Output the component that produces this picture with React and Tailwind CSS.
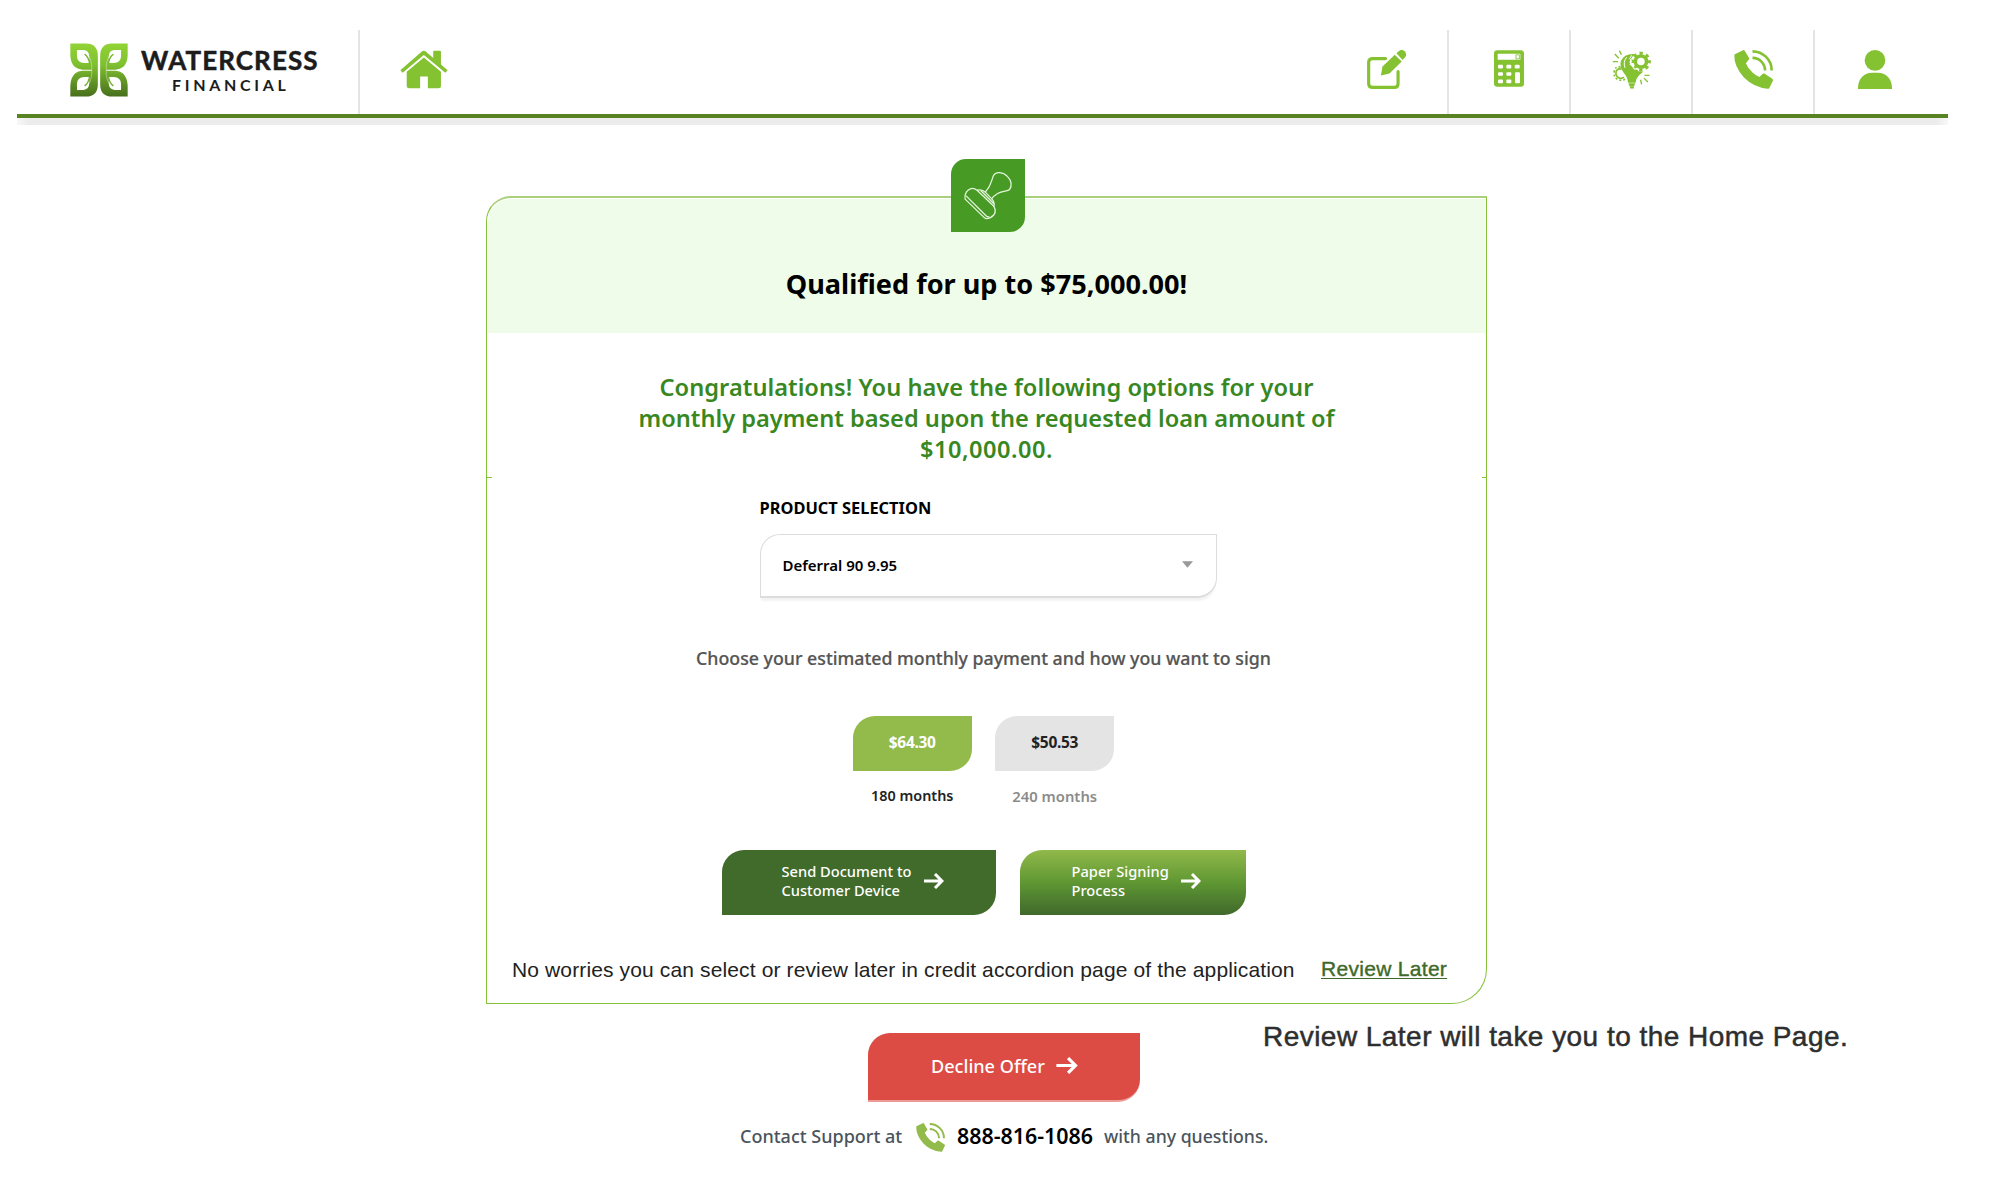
import React from "react";

function LogoHalf() {
  return (
    <g>
      <path d="M31 22H78Q114 22 114 60V144Q114 182 78 182H31V148Q32 124 46 112Q54 105 68 104H95V101H68Q54 100 45 93Q32 82 31 58Z" fill="url(#leaf)" />
      <path d="M51 42H70Q88 43 88 62V81H73Q51 80 51 60ZM51 162H70Q88 161 88 142V123H73Q51 124 51 144Z" fill="#fff" />
      <path d="M74 54Q86 62 89 82M74 150Q86 142 89 122" fill="none" stroke="#74b32f" strokeWidth="4" />
      <path d="M82 53Q95 68 95.500 88V116Q95 136 82 151" fill="none" stroke="#fff" strokeWidth="2" opacity=".55" />
    </g>
  );
}

function Logo() {
  return (
    <svg viewBox="30 21 175 162" className="h-[54px] w-[58px]">
      <defs>
        <linearGradient id="leaf" gradientUnits="userSpaceOnUse" x1="0" y1="22" x2="0" y2="182">
          <stop offset="0" stopColor="#92d336" />
          <stop offset=".4" stopColor="#7fc030" />
          <stop offset="1" stopColor="#486f1d" />
        </linearGradient>
      </defs>
      <LogoHalf />
      <g transform="translate(235 0) scale(-1 1)">
        <LogoHalf />
      </g>
    </svg>
  );
}

function HomeIcon() {
  return (
    <svg viewBox="1201 91 143 116" className="h-[39px] w-[48px]" fill="#84c232">
      <path d="M1202 151L1267 95Q1272 91 1277 95L1300 115V96Q1300 93 1303 93H1320Q1323 93 1323 96V134L1343 151L1336 159L1272 106L1209 159Z" />
      <path d="M1272 113L1323 156V199Q1323 205 1316 205H1284V170H1261V205H1228Q1221 205 1221 198V156Z" />
    </svg>
  );
}

function EditIcon() {
  return (
    <svg viewBox="81 89 118 118" className="h-[39px] w-[39px]" fill="#84c232">
      <path d="M137 115H98Q86 115 86 127V190Q86 202 98 202H164Q175 202 175 190V154" fill="none" stroke="#84c232" strokeWidth="9.500" strokeLinecap="round" />
      <path d="M123 166L128 139L165 103L186 124L149 160Z" />
      <path d="M170 99L178 92Q187 85 195 93Q203 102 196 111L189 119Z" />
    </svg>
  );
}

function CalculatorIcon() {
  return (
    <svg viewBox="462 94 90 110" className="h-[37px] w-[30px]">
      <rect x="462" y="94" width="90" height="110" rx="10" fill="#84c232" />
      <g fill="#fff">
        <rect x="473" y="105" width="68" height="18" rx="2" />
        {[474, 499, 524].map((x) => (
          <rect key={x} x={x} y="138" width="15" height="11" rx="3" />
        ))}
        {[474, 499].map((x) => (
          <rect key={x} x={x} y="160" width="15" height="11" rx="3" />
        ))}
        {[474, 499].map((x) => (
          <rect key={x} x={x} y="182" width="15" height="11" rx="3" />
        ))}
        <rect x="525" y="160" width="15" height="33" rx="3" />
      </g>
      <rect x="528" y="108" width="10" height="12" fill="none" stroke="#84c232" strokeWidth="2.500" />
    </svg>
  );
}

function IdeaIcon() {
  return (
    <svg viewBox="814 90 117 118" className="h-[39px] w-[39px]" fill="none" stroke="#84c232">
      <path d="M882 102Q850 100 840 124Q836 144 850 160Q861 172 862 189H885Q886 176 896 166L908 156Q896 156 890 150L880 148L872 138L866 126L874 112Z" fill="#84c232" stroke="none" />
      <circle cx="901" cy="125" r="17" strokeWidth="11" />
      <circle cx="901" cy="125" r="25.500" strokeWidth="9" strokeDasharray="10 10.030" strokeDashoffset="5" />
      <path d="M873 106L867 116L873 124L868 134L878 138L881 148L890 146L895 155" stroke="#fff" strokeWidth="3" />
      <path d="M858 112Q846 126 853 144" stroke="#fff" strokeWidth="3" />
      <path d="M842 148Q830 145 826 155Q823 168 834 174Q842 178 850 172" strokeWidth="5" />
      <path d="M840 142Q822 138 820 156Q817 172 832 180Q844 184 854 178" strokeWidth="5" strokeDasharray="6 6" />
      <path d="M864 193H883M866 198H881M868 204H880" strokeWidth="5" />
      <path d="M836 92L842 104M822 102L834 115M816 125L832 125M912 167L927 167M910 175L922 187M900 180L903 194" strokeWidth="4" />
    </svg>
  );
}

function PhoneIcon({ className, color }) {
  return (
    <svg viewBox="190 90 118 118" className={className} fill={color}>
      <path d="M191 106Q191 103 194 102L219 90Q221 90 223 93L236 115Q237 117 235 119L226 130Q231 144 246 158Q257 168 267 172L277 162Q280 160 283 162L306 177Q308 179 308 182L297 205Q296 208 292 207Q250 203 220 173Q190 140 191 106Z" />
      <path d="M246 94A58 58 0 0 1 304 152M246 114A38 38 0 0 1 284 152" fill="none" stroke={color} strokeWidth="8" />
    </svg>
  );
}

function UserIcon() {
  return (
    <svg viewBox="564 90 102 117" className="h-[39px] w-[34px]" fill="#84c232">
      <circle cx="615" cy="121" r="31" />
      <path d="M564 207V203C565 174 583 158 606 158H624C647 158 665 174 666 203V207Z" />
    </svg>
  );
}

function StampIcon() {
  return (
    <svg viewBox="631 57 220 220" className="size-full" fill="none" stroke="#e4f6dc" strokeWidth="3.800" strokeLinejoin="round">
      <path d="M733 157C752 135 750 125 757 108C764 93 787 96 800 110C812 122 814 138 806 149C800 155 785 152 770 161C760 167 756 171 751 178" />
      <path d="M672 178Q670 160 681 151Q694 140 708 151L757 198Q768 212 759 225Q749 236 737 237Q733 237 729 233Z" />
      <path d="M675 168L735 228Q739 232 745 231M708 151Q723 147 733 157L753 178Q762 188 759 201M719 152L758 191" />
    </svg>
  );
}

function Arrow({ className }) {
  return (
    <svg viewBox="0 0 20 16" className={className} fill="none" stroke="currentColor" strokeWidth="3">
      <path d="M0 8H18M11 1L18 8L11 15" />
    </svg>
  );
}

function NavCell({ children }) {
  return <div className="flex w-[122px] justify-center border-l-2 border-[#e4e4e4] pt-5">{children}</div>;
}

function Header() {
  return (
    <header className="ml-[17px] w-[1931px]">
      <div className="flex h-[118px] justify-between border-b-4 border-[#588323] pt-[30px]">
        <div className="flex">
          <div className="flex w-[343px] border-r-2 border-[#e4e4e4] pt-[13px] pl-[53px]">
            <Logo />
            <div className="ml-[13px] flex w-[180px] flex-col font-['Lato',sans-serif] text-[#1c1c1c]">
              <span className="mt-0.5 text-[26px] leading-[31px] font-bold tracking-[1.100px] whitespace-nowrap [-webkit-text-stroke:0.500px_#1c1c1c]">WATERCRESS</span>
              <span className="pl-[31px] text-[16px] leading-[18px] font-bold tracking-[3.700px]">FINANCIAL</span>
            </div>
          </div>
          <div className="flex w-[128px] justify-center pt-5">
            <HomeIcon />
          </div>
        </div>
        <nav className="flex pr-[13px]">
          <div className="flex w-[122px] justify-center pt-5">
            <EditIcon />
          </div>
          <NavCell>
            <CalculatorIcon />
          </NavCell>
          <NavCell>
            <IdeaIcon />
          </NavCell>
          <NavCell>
            <PhoneIcon className="h-[39px] w-[39px]" color="#84c232" />
          </NavCell>
          <NavCell>
            <UserIcon />
          </NavCell>
        </nav>
      </div>
      <div className="h-[7px] bg-[linear-gradient(90deg,#f8f8f8,#ececec_12px,#ececec_calc(100%-12px),#f8f8f8)]" />
    </header>
  );
}

function Payment({ amount, term, active }) {
  return (
    <div className="flex w-[119px] flex-col items-center text-center font-semibold">
      <div
        className={
          active
            ? "flex h-[55px] w-full items-center justify-center rounded-tl-[22px] rounded-br-[22px] bg-[#93bb4b] text-[15.500px] leading-5 font-bold text-white"
            : "flex h-[55px] w-full items-center justify-center rounded-tl-[22px] rounded-br-[22px] bg-[#e4e4e4] text-[15.500px] leading-5 font-bold text-[#222]"
        }
      >
        <span className="-mt-1 tracking-[-0.300px]">{amount}</span>
      </div>
      <div className={active ? "mt-[15px] text-[14.400px] leading-5 text-[#222]" : "mt-[15px] text-[14.800px] leading-5 text-[#8b8b8b]"}>{term}</div>
    </div>
  );
}

export default function App() {
  return (
    <div className="h-[1200px] w-[2010px] overflow-hidden bg-white font-['Noto_Sans',sans-serif]">
      <Header />
      <main>
        <section className="relative mt-[71px] ml-[486px] flex h-[808px] w-[1001px] flex-col items-center rounded-tl-[25px] rounded-br-[35px] border border-t-2 border-[#86c23a] border-t-[#a9d07c] pt-px">
          <div className="absolute -top-[39px] left-[463.500px] h-[73px] w-[74px] overflow-hidden rounded-tl-[15px] rounded-br-[15px] bg-[#479a24]">
            <StampIcon />
          </div>
          <div className="absolute top-[279px] left-0 h-px w-[5px] bg-[#86c23a]" />
          <div className="absolute top-[279px] right-0 h-px w-[4px] bg-[#86c23a]" />

          <div className="h-[134px] w-[997px] shrink-0 rounded-tl-[23px] bg-[#effce9] pt-[65px] text-center">
            <h1 className="text-[27.100px] leading-10 font-bold text-black">Qualified for up to $75,000.00!</h1>
          </div>
          <p className="mt-[39px] text-center text-[23.600px] leading-[31px] font-semibold whitespace-nowrap text-[#38871f]">
            <span className="tracking-[0.040px]">Congratulations! You have the following options for your</span>
            <br />
            monthly payment based upon the requested loan amount of
            <br />
            <span className="tracking-[0.500px]">$10,000.00.</span>
          </p>

          <div className="mt-[33px] ml-[3px] w-[457px]">
            <div className="text-[16.400px] leading-5 font-bold text-black">PRODUCT SELECTION</div>
            <div className="mt-4 flex h-16 items-center justify-between rounded-tl-[20px] rounded-br-[20px] border border-b-2 border-[#dcdcdc] pr-[23px] pl-[22px] shadow-[0_4px_2px_-1px_#f3f3f3]">
              <span className="-mt-0.5 text-[15px] leading-5 font-semibold text-black">Deferral 90 9.95</span>
              <svg viewBox="0 0 12 7" className="-mt-0.5 h-[7px] w-[11px]" fill="#999">
                <path d="M0 0H12L6 7Z" />
              </svg>
            </div>
          </div>

          <p className="mt-12 -ml-[6px] text-[17.750px] leading-6 font-medium whitespace-nowrap text-[#555] [-webkit-text-stroke:0.200px_#555]">
            Choose your estimated monthly payment and how you want to sign
          </p>
          <div className="mt-[46px] -ml-[6px] flex gap-[23.500px]">
            <Payment amount="$64.30" term="180 months" active />
            <Payment amount="$50.53" term="240 months" />
          </div>

          <div className="mt-11 -ml-[6px] flex gap-6 text-[14.650px] leading-[19px] font-medium text-white">
            <button className="flex h-[65px] w-[274px] items-center rounded-tl-[22px] rounded-br-[22px] bg-[#406b2b] pl-[60px] text-left">
              <span className="-mt-1 w-[142px] whitespace-nowrap">
                Send Document to
                <br />
                Customer Device
              </span>
              <Arrow className="-mt-1 h-4 w-5" />
            </button>
            <button className="flex h-[65px] w-[226px] items-center rounded-tl-[22px] rounded-br-[22px] bg-linear-to-b from-[#91b94a] via-[#5f9733] to-[#40692b] pl-[52px] text-left">
              <span className="-mt-1 w-[109px] whitespace-nowrap">
                Paper Signing
                <br />
                Process
              </span>
              <Arrow className="-mt-1 h-4 w-5" />
            </button>
          </div>

          <div className="mt-[43px] flex w-full pl-[25px] font-['Liberation_Sans',sans-serif] text-[21px] leading-6 whitespace-nowrap">
            <span className="w-[809px] tracking-[0.130px] text-[#222]">
              No worries you can select or review later in credit accordion page of the application
            </span>
            <a className="-mt-px tracking-[0.300px] text-[#3f6a29] underline decoration-1 underline-offset-2 [-webkit-text-stroke:0.400px_#3f6a29]">Review Later</a>
          </div>
        </section>

        <div className="flex items-start pl-[868px]">
          <button className="mt-[29px] flex h-[69px] w-[272px] items-center rounded-tl-[22px] rounded-br-[22px] border-b-2 border-[#ec9b96] bg-[#dd4c44] pl-[63px] text-left text-[18.100px] leading-6 font-medium text-white">
            <span className="-mt-0.5 w-[125px] whitespace-nowrap">Decline Offer</span>
            <Arrow className="-mt-0.5 h-[17px] w-[22px]" />
          </button>
          <p className="mt-[17px] ml-[123px] font-['Liberation_Sans',sans-serif] text-[28px] leading-8 tracking-[0.460px] whitespace-nowrap text-[#2e2e2e] [-webkit-text-stroke:0.500px_#2e2e2e]">
            Review Later will take you to the Home Page.
          </p>
        </div>

        <div className="mt-[19px] flex pl-[740px] text-[18px] leading-[30px] font-medium whitespace-nowrap text-[#4a545c]">
          <span className="w-[176px]">Contact Support at</span>
          <PhoneIcon className="mt-0.5 h-[29px] w-[29px]" color="#93bb4b" />
          <span className="w-[147px] pl-3 text-[21.400px] font-semibold text-black">888-816-1086</span>
          <span className="pl-3 text-[17.700px]">with any questions.</span>
        </div>
      </main>
    </div>
  );
}
